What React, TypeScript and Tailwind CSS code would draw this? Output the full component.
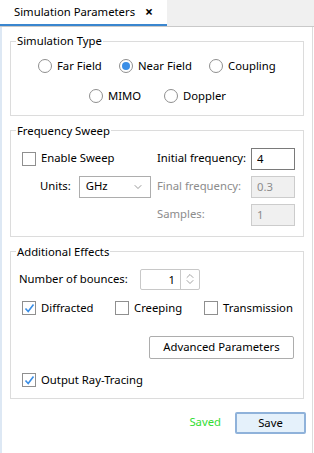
import { ChevronDown, ChevronUp } from 'lucide-react'

const font = { fontFamily: '"Segoe UI", "Noto Sans", "Open Sans", sans-serif' }

function Radio({ label, checked, className }: { label: string; checked?: boolean; className?: string }) {
  return (
    <label className={'flex items-center gap-[5px] ' + (className ?? '')}>
      <span className="w-[14px] h-[14px] rounded-full border border-[#8f8f8f] bg-white flex items-center justify-center">
        {checked && <span className="w-[8px] h-[8px] rounded-full bg-[#3a8ee6]" />}
      </span>
      <span>{label}</span>
    </label>
  )
}

function Check({ label, checked }: { label: string; checked?: boolean }) {
  return (
    <label className="flex items-center gap-[5px] whitespace-nowrap">
      <span className="w-[14px] h-[14px] border border-[#8f8f8f] bg-white flex items-center justify-center">
        {checked && (
          <svg width="11" height="11" viewBox="0 0 11 11">
            <path d="M1.5 5.5 L4.2 8.5 L9.5 1.5" fill="none" stroke="#3a8ee6" strokeWidth="1.6" />
          </svg>
        )}
      </span>
      <span>{label}</span>
    </label>
  )
}

function Group({ title, className, children }: { title: string; className?: string; children: React.ReactNode }) {
  return (
    <fieldset className={'border border-[#dcdcdc] px-[8px] ' + (className ?? '')}>
      <legend className="px-[1px] ml-[-3px] leading-[14px]">{title}</legend>
      {children}
    </fieldset>
  )
}

export default function App() {
  return (
    <div className="w-[314px] h-[453px] bg-white flex flex-col text-[11.3px] text-black" style={font}>
      {/* tab strip */}
      <div className="h-[27px] flex bg-[#f0f0f0] border-b border-[#c9c9c9]">
        <div className="w-[167px] bg-white border-b-2 border-[#3a86cf] flex items-center pl-[14px] gap-[10px]">
          <span className="whitespace-nowrap">Simulation Parameters</span>
          <span className="text-[14px] font-bold leading-none">×</span>
        </div>
      </div>

      <div className="flex-1 flex">
        <div className="w-[2px] bg-[#dde8f4]" />
        <div className="flex-1 flex flex-col px-[8px] pt-[7px]">
          <Group title="Simulation Type" className="pb-[10px]">
            <div className="flex pt-[10px] pl-[19px]">
              <Radio label="Far Field" className="w-[81px]" />
              <Radio label="Near Field" checked className="w-[90px]" />
              <Radio label="Coupling" />
            </div>
            <div className="flex pt-[13px] pl-[70px]">
              <Radio label="MIMO" className="w-[75px]" />
              <Radio label="Doppler" />
            </div>
          </Group>

          <Group title="Frequency Sweep" className="mt-[8px] pb-[10px]">
            <div className="grid grid-cols-[135px_94px_44px] items-center gap-y-[6px] pt-[10px] pl-[3px] whitespace-nowrap">
              <Check label="Enable Sweep" />
              <span>Initial frequency:</span>
              <input readOnly value="4" className="w-[44px] h-[22px] border border-[#7a7a7a] px-[5px] outline-none" />

              <div className="flex items-center gap-[8px] pl-[18px]">
                <span>Units:</span>
                <div className="w-[72px] h-[22px] border border-[#adadad] flex items-center justify-between px-[6px]">
                  <span>GHz</span>
                  <ChevronDown size={12} strokeWidth={1.2} className="text-[#555]" />
                </div>
              </div>
              <span className="text-[#8c8c8c]">Final frequency:</span>
              <input readOnly disabled value="0.3" className="w-[44px] h-[22px] border border-[#cccccc] bg-[#f0f0f0] text-[#8c8c8c] px-[5px] outline-none" />

              <span />
              <span className="text-[#8c8c8c]">Samples:</span>
              <input readOnly disabled value="1" className="w-[44px] h-[22px] border border-[#cccccc] bg-[#f0f0f0] text-[#8c8c8c] px-[5px] outline-none" />
            </div>
          </Group>

          <Group title="Additional Effects" className="mt-[8px] pb-[9px]">
            <div className="flex items-center pt-[10px]">
              <span className="w-[121px]">Number of bounces:</span>
              <div className="w-[60px] h-[21px] border border-[#c8c8c8] rounded-[2px] flex">
                <span className="flex-1 text-right pr-[5px] leading-[19px]">1</span>
                <div className="w-[19px] border-l border-[#c8c8c8] flex flex-col items-center justify-center text-[#666]">
                  <ChevronUp size={12} strokeWidth={1.2} className="-mb-[3px]" />
                  <ChevronDown size={12} strokeWidth={1.2} className="-mt-[3px]" />
                </div>
              </div>
            </div>
            <div className="flex items-center pt-[10px] pl-[3px]">
              <div className="w-[93px]"><Check label="Diffracted" checked /></div>
              <div className="w-[89px]"><Check label="Creeping" /></div>
              <Check label="Transmission" />
            </div>
            <div className="flex justify-end pt-[19px] pr-[1px]">
              <button className="w-[145px] h-[23px] border border-[#adadad] bg-white rounded-[2px]">Advanced Parameters</button>
            </div>
            <div className="pt-[13px] pl-[3px]">
              <Check label="Output Ray-Tracing" checked />
            </div>
          </Group>

          <div className="flex items-center justify-end gap-[14px] pt-[13px]">
            <span className="text-[#33dd33]">Saved</span>
            <button className="w-[71px] h-[22px] border-2 border-[#8fb2da] bg-[#e5f1fb] rounded-[2px] leading-none mr-[-2px]">Save</button>
          </div>
        </div>
        <div className="w-[2px] border-l border-[#dcdcdc]" />
      </div>
    </div>
  )
}
